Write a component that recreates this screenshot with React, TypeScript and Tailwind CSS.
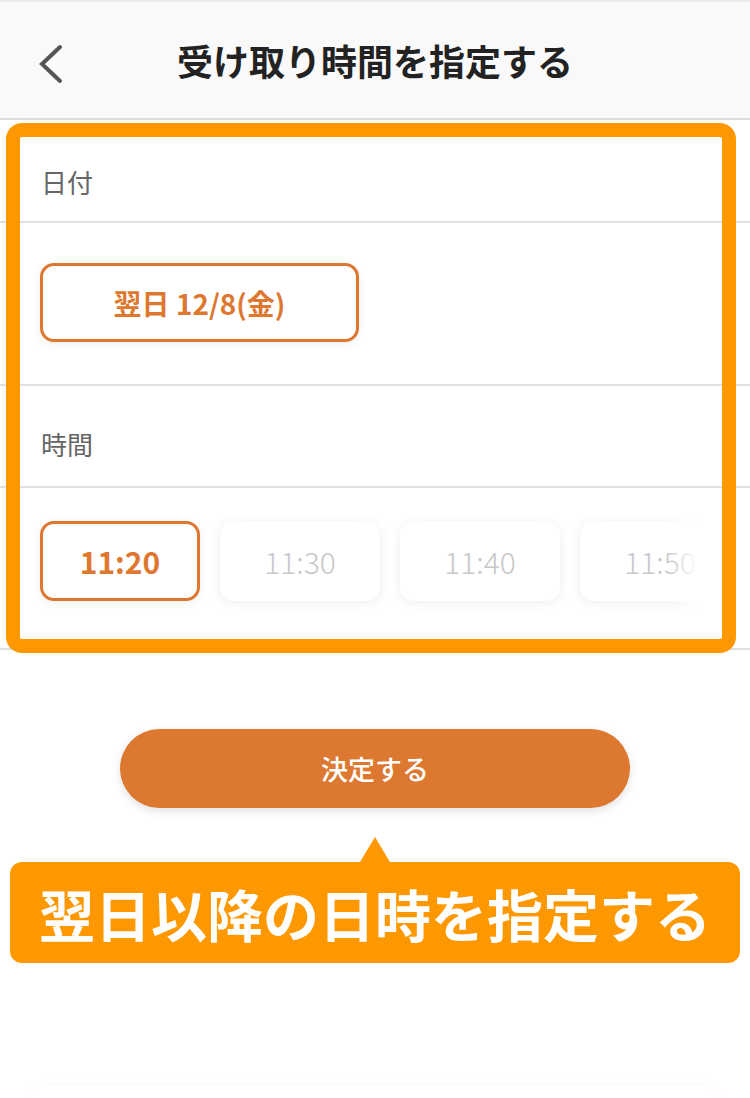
import React from "react";

const jp = { fontFamily: '"Noto Sans CJK JP", "Noto Sans", sans-serif' };

const times = ["11:20", "11:30", "11:40", "11:50"];

function Separator() {
  return <div className="h-[2px] w-full bg-[#e0e0e0]" />;
}

export default function App() {
  const selected = "11:20";

  return (
    <div className="relative w-[750px] h-[1098px] bg-white overflow-hidden" style={jp}>
      {/* Header */}
      <div className="h-[2px] bg-[#ededed]" />
      <header className="relative flex items-center justify-center h-[118px] bg-[#f9f9f9] border-b-2 border-[#dedede]">
        <button className="absolute left-[38px] top-[42px] w-[26px] h-[40px] flex items-center justify-center">
          <svg width="26" height="40" viewBox="0 0 26 40" fill="none">
            <polyline
              points="22,3 4,20 22,37"
              stroke="#555555"
              strokeWidth="4"
              strokeLinecap="round"
              strokeLinejoin="miter"
            />
          </svg>
        </button>
        <h1 className="text-[36px] font-bold text-[#222222] leading-none">
          受け取り時間を指定する
        </h1>
      </header>

      {/* Date label */}
      <div className="h-[101px] pt-[44px] pl-[41px]">
        <span className="block text-[26px] leading-[36px] text-[#666666]">日付</span>
      </div>
      <Separator />

      {/* Date choice */}
      <div className="h-[161px] pt-[40px] pl-[40px]">
        <button className="w-[319px] h-[79px] rounded-[14px] border-[3px] border-[#de7830] bg-white shadow-[0_2px_10px_rgba(0,0,0,0.07)] flex items-center justify-center">
          <span className="text-[28px] font-bold text-[#de7830] leading-none">翌日 12/8(金)</span>
        </button>
      </div>
      <Separator />

      {/* Time label */}
      <div className="h-[100px] pt-[40px] pl-[41px]">
        <span className="block text-[26px] leading-[36px] text-[#666666]">時間</span>
      </div>
      <Separator />

      {/* Time chips */}
      <div className="h-[160px] pl-[30px] relative">
        <div className="w-[668px] h-full overflow-hidden flex items-start pt-[33px] gap-[20px] pl-[10px]">
          {times.map((t) => {
            const active = t === selected;
            return (
              <div
                key={t}
                className={`shrink-0 w-[160px] h-[80px] rounded-[14px] bg-white flex items-center justify-center ${
                  active
                    ? "border-[3px] border-[#de7830] shadow-[0_2px_10px_rgba(0,0,0,0.07)]"
                    : "shadow-[0_2px_12px_rgba(0,0,0,0.07)]"
                }`}
              >
                <span
                  className={`text-[30px] leading-none ${
                    active ? "font-bold text-[#de7830]" : "font-light text-[#c8c8c8]"
                  }`}
                >
                  {t}
                </span>
              </div>
            );
          })}
        </div>
        <div className="absolute left-[668px] top-0 h-full w-[30px] bg-gradient-to-r from-white/0 to-white" />
      </div>
      <Separator />

      {/* Submit */}
      <div className="flex justify-center pt-[79px]">
        <button className="w-[510px] h-[79px] rounded-full bg-[#dc782f] shadow-[0_3px_10px_rgba(0,0,0,0.12)] flex items-center justify-center">
          <span className="text-[27px] font-medium text-white leading-none">決定する</span>
        </button>
      </div>

      {/* Callout */}
      <div className="flex flex-col items-center pt-[29px] px-[10px]">
        <div className="w-0 h-0 border-l-[15px] border-r-[15px] border-b-[25px] border-l-transparent border-r-transparent border-b-[#fe9800]" />
        <div className="w-[730px] h-[101px] rounded-[12px] bg-[#fe9800] flex items-center justify-center">
          <span className="text-[56px] font-bold text-white leading-none">翌日以降の日時を指定する</span>
        </div>
      </div>

      {/* Bottom bar hint */}
      <div className="absolute left-[30px] right-[30px] bottom-[-24px] h-[36px] rounded-[18px] bg-white shadow-[0_-3px_10px_rgba(0,0,0,0.025)]" />

      {/* Highlight frame */}
      <div className="absolute left-[6px] top-[123px] w-[730px] h-[530px] rounded-[16px] border-[14px] border-[#fe9800] pointer-events-none" />
    </div>
  );
}
